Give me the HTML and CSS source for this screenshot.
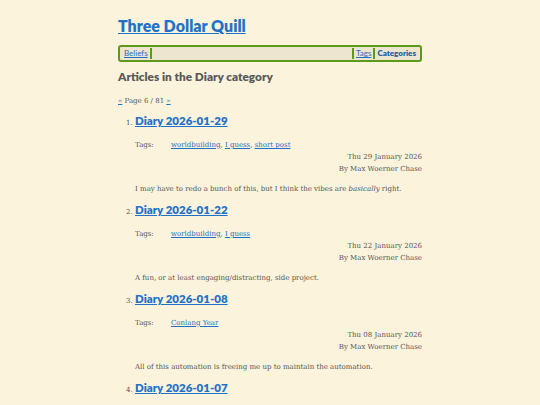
FILE: index.html
```html
<!DOCTYPE html>
<html lang="en">
<head>
<meta charset="utf-8">
<title>Three Dollar Quill</title>
<link rel="stylesheet" href="styles.css">
</head>
<body>
<div class="page">
  <header class="site-header">
    <h1 class="site-title"><a href="#">Three Dollar Quill</a></h1>
    <nav class="menu">
      <a class="menu-item menu-first" href="#">Beliefs</a>
      <span class="menu-spacer"></span>
      <a class="menu-item menu-sep" href="#">Tags</a>
      <span class="menu-item menu-sep menu-current">Categories</span>
    </nav>
  </header>
  <main>
    <h2 class="page-heading">Articles in the Diary category</h2>
    <p class="pager"><a href="#">«</a> Page 6 / 81 <a href="#">»</a></p>
    <ol class="articles">
      <li class="article">
        <h3 class="article-title"><a href="#">Diary 2026-01-29</a></h3>
        <div class="tags"><span class="tags-label">Tags:</span><span class="tags-list"><a href="#">worldbuilding</a>, <a href="#">I guess</a>, <a href="#">short post</a></span></div>
        <div class="byline"><div>Thu 29 January 2026</div><div>By Max Woerner Chase</div></div>
        <p class="summary">I may have to redo a bunch of this, but I think the vibes are <em>basically</em> right.</p>
      </li>
      <li class="article">
        <h3 class="article-title"><a href="#">Diary 2026-01-22</a></h3>
        <div class="tags"><span class="tags-label">Tags:</span><span class="tags-list"><a href="#">worldbuilding</a>, <a href="#">I guess</a></span></div>
        <div class="byline"><div>Thu 22 January 2026</div><div>By Max Woerner Chase</div></div>
        <p class="summary">A fun, or at least engaging/distracting, side project.</p>
      </li>
      <li class="article">
        <h3 class="article-title"><a href="#">Diary 2026-01-08</a></h3>
        <div class="tags"><span class="tags-label">Tags:</span><span class="tags-list"><a href="#">Conlang Year</a></span></div>
        <div class="byline"><div>Thu 08 January 2026</div><div>By Max Woerner Chase</div></div>
        <p class="summary">All of this automation is freeing me up to maintain the automation.</p>
      </li>
      <li class="article">
        <h3 class="article-title"><a href="#">Diary 2026-01-07</a></h3>
        <div class="tags"><span class="tags-label">Tags:</span><span class="tags-list"><a href="#">worldbuilding</a></span></div>
        <div class="byline"><div>Wed 07 January 2026</div><div>By Max Woerner Chase</div></div>
        <p class="summary">More notes.</p>
      </li>
    </ol>
  </main>
</div>
</body>
</html>
```
FILE: styles.css
```css
html, body {
  margin: 0;
  padding: 0;
  background: #fbf3dc;
}
body {
  font-family: "DejaVu Serif", "Liberation Serif", serif;
  font-size: 7px;
  color: #555;
}
a { color: #1f6fc4; }
.page {
  width: 304px;
  margin: 0 auto;
  padding-top: 14px;
}
.site-title {
  margin: 0;
  font-family: Lato, "Noto Sans", sans-serif;
  font-size: 16px;
  line-height: 24px;
  font-weight: 800;
}
.site-title a { color: #1f72c8; }
.menu {
  margin-top: 7px;
  display: flex;
  align-items: center;
  border: 2px solid #5d9a1c;
  border-radius: 3px;
  background: #ede5d0;
  padding: 1px 2px;
  font-family: Lato, "Noto Sans", sans-serif;
  font-size: 8px;
  line-height: 11px;
}
.menu-item { padding: 0 2px; }
.menu-first { border-right: 2px solid #5d9a1c; }
.menu-spacer { flex: 1; }
.menu-sep { border-left: 2px solid #5d9a1c; }
.menu-current { color: #1f5fa8; font-weight: 800; }
.page-heading {
  margin: 7px 0 0;
  font-family: Lato, "Noto Sans", sans-serif;
  font-size: 11.8px;
  line-height: 16px;
  font-weight: 800;
  color: #5a5a5a;
}
.pager { margin: 11px 0 0; line-height: 10px; }
.articles {
  margin: 7px 0 0;
  padding-left: 17px;
}
.article-title {
  margin: 0;
  font-family: Lato, "Noto Sans", sans-serif;
  font-size: 11.5px;
  line-height: 16px;
  font-weight: 800;
  display: inline;
}
.article-title a { color: #1f72c8; }
.tags {
  display: flex;
  margin-top: 10px;
  line-height: 12px;
}
.tags-label { width: 36px; }
.byline { text-align: right; line-height: 12px; }
.summary { margin: 8px 0 7px; line-height: 12px; }
```
